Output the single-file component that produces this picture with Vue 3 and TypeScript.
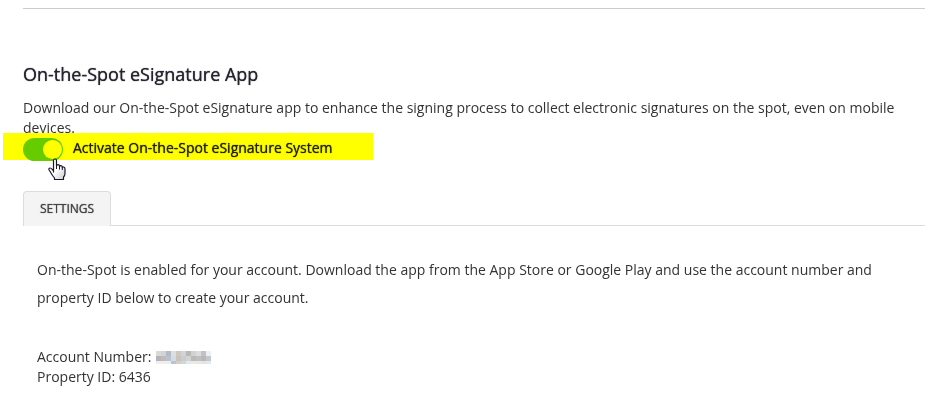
<script setup lang="ts">
import { ref } from 'vue'

const active = ref(true)
const propertyId = '6436'

// Rows of 5px cells that obscure the account number.
const mosaic: string[][] = [
  ['#ddd8d0', '#cdd5dc', '#b8b8c0', '#d8e0e4', '#ccc8c0', '#d0d4d8', '#b8b8b8', '#d4d2d0', '#d8dce4', '#c8c0bc', '#e8f0f8'],
  ['#b4b4bc', '#c4bab4', '#b4c4d0', '#d4dce2', '#c8c4bc', '#c8ccd4', '#d4d4ce', '#bcbab8', '#c0c0c0', '#b8b8b8', '#c4c8cc'],
  ['#eeeeee', '#eeeeee', '#eeeeee', '#c0c2ca', '#d4cec8', '#d0d6da', '#e0e8f0', '#eee8e2', '#e8e8e8', '#e8e2e2', '#e0e8f0'],
]
</script>

<template>
  <main class="page">
    <hr class="divider" />
    <section>
      <h2 class="title">On-the-Spot eSignature App</h2>
      <p class="intro">
        Download our On-the-Spot eSignature app to enhance the signing process to collect electronic signatures on the
        spot, even on mobile devices.
      </p>
      <div class="activation">
        <input id="activate" v-model="active" class="switch" type="checkbox" role="switch" />
        <label class="switch-label" for="activate">Activate On-the-Spot eSignature System</label>
        <svg class="pointer" width="18" height="24" viewBox="0 0 18 24" aria-hidden="true">
          <path
            d="M5.5 14.5V2.5Q5.5 1 7 1Q8.5 1 8.5 2.5V8Q8.7 6.7 10 6.7Q11.5 6.7 11.5 8.5Q11.8 7.5 13 7.7Q14.2 7.9 14.3 9.5Q14.6 8.7 15.6 9Q17 9.3 17 11V15.5Q17 17.5 15.5 19V21.5H6.5V20L4.5 17.5L1 11.8Q.5 10.5 1.8 10Q3 9.8 4.2 11.3L5.5 13"
            fill="url(#hand)"
            stroke="#171730"
            stroke-width="1.2"
            stroke-linejoin="round"
          />
          <path d="M8.5 7.5V11M11.5 8.5V11.5M14.3 9.5V12" fill="none" stroke="#171730" stroke-width="1" />
          <defs>
            <linearGradient id="hand" x1="0" y1="0" x2="1" y2="1">
              <stop offset="0.5" stop-color="#fff" />
              <stop offset="1" stop-color="#c8c8c8" />
            </linearGradient>
          </defs>
        </svg>
      </div>
    </section>
    <section>
      <div class="tabs" role="tablist">
        <button id="settings-tab" class="tab" type="button" role="tab" aria-selected="true" aria-controls="settings">
          SETTINGS
        </button>
      </div>
      <div id="settings" class="panel" role="tabpanel" aria-labelledby="settings-tab">
        <p class="message">
          On-the-Spot is enabled for your account. Download the app from the App Store or Google Play and use the
          account number and property ID below to create your account.
        </p>
        <div class="detail">
          <span>Account Number:</span>
          <svg class="mosaic" width="55" height="13" viewBox="0 0 55 13" shape-rendering="crispEdges" aria-hidden="true">
            <template v-for="(row, y) in mosaic" :key="y">
              <rect
                v-for="(color, x) in row"
                :key="x"
                :x="x * 5"
                :y="y * 5"
                width="5"
                height="5"
                :fill="color"
              />
            </template>
          </svg>
        </div>
        <div class="detail">Property ID: {{ propertyId }}</div>
      </div>
    </section>
  </main>
</template>

<style>
body {
  background: #fff;
}
</style>

<style scoped>
.page {
  padding: 8px 17px 16px 23px;
  font-family: 'Open Sans', 'Noto Sans', sans-serif;
  font-size: 14px;
  line-height: 20px;
  color: #333;
}
.divider {
  height: 1px;
  margin: 0;
  border: 0;
  background: #ccc;
}
.title {
  margin: 53px 0 12px;
  font-size: 18px;
  font-weight: 400;
  line-height: 24px;
  color: #24242e;
  text-shadow: 0 0 1px currentColor;
}
.intro {
  margin: 0;
}
.activation {
  position: relative;
  display: flex;
  align-items: center;
  width: 350px;
  height: 27px;
  margin: -5px 0 0 -20px;
  padding-left: 20px;
  background: #ff0;
  mix-blend-mode: multiply;
}
.switch {
  appearance: none;
  flex: none;
  display: flex;
  align-items: center;
  width: 40px;
  height: 23px;
  margin: 5px 10px 0 0;
  padding: 0 1px;
  border-radius: 12px;
  background: #bbb;
  cursor: pointer;
}
.switch:checked {
  justify-content: flex-end;
  background: #6c0;
}
.switch::before {
  content: '';
  width: 19px;
  height: 19px;
  border-radius: 50%;
  background: #ff0;
}
.switch-label {
  color: #222200;
  text-shadow: 0 0 1px currentColor;
  margin-top: 3px;
  cursor: pointer;
}
.pointer {
  position: absolute;
  left: 45px;
  top: 25px;
  pointer-events: none;
}
.tabs {
  display: flex;
  margin-top: 31px;
  border-bottom: 1px solid #dcdcdc;
}
.tab {
  height: 35px;
  margin-bottom: -1px;
  padding: 0 16px;
  border: 1px solid #dcdcdc;
  border-bottom: 0;
  border-radius: 4px 4px 0 0;
  background: #f4f4f4;
  font-family: inherit;
  font-size: 12px;
  line-height: 20px;
  color: #444;
  text-shadow: 0 0 1px currentColor;
}
.panel {
  padding: 30px 14px 0;
}
.message {
  margin: 0 0 35px;
  line-height: 28px;
}
.detail {
  display: flex;
  align-items: center;
  gap: 5px;
}
</style>
